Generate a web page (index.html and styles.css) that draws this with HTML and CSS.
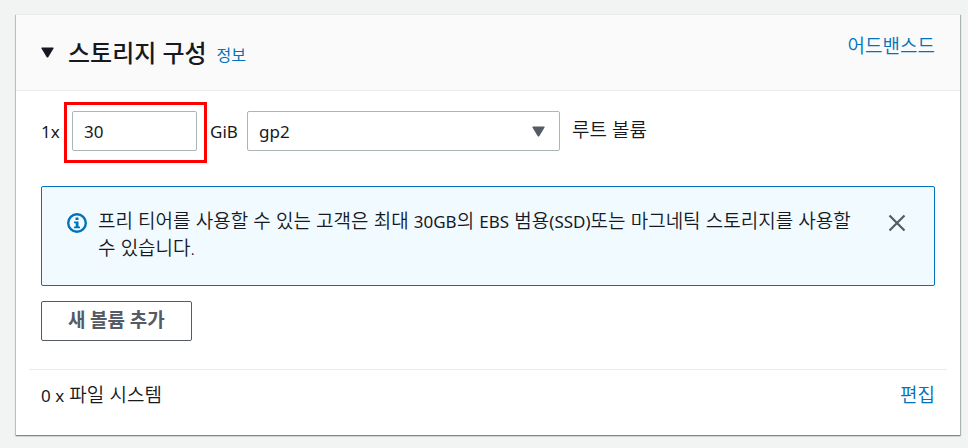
FILE: index.html
```html
<!DOCTYPE html>
<html lang="ko">
<head>
<meta charset="utf-8">
<meta name="viewport" content="width=device-width, initial-scale=1">
<title>스토리지 구성</title>
<link rel="stylesheet" href="styles.css">
</head>
<body>
<main class="card">
  <header class="card-header">
    <button class="toggle" type="button" aria-label="스토리지 구성" aria-expanded="true">
      <svg class="caret" viewBox="0 0 13 11" aria-hidden="true"><path d="M1 .5h11q1 0 .5 1L7.400 10q-.9 1-1.800 0L.5 1.500Q0 .5 1 .5z"/></svg>
    </button>
    <h2 class="title">스토리지 구성</h2>
    <a class="info-link" href="#info">정보</a>
    <a class="advanced" href="#advanced">어드밴스드</a>
  </header>
  <div class="card-body">
    <div class="volume">
      <label class="count" for="size">1x</label>
      <span class="highlight"><input class="size" id="size" type="text" value="30"></span>
      <label class="unit" for="type">GiB</label>
      <span class="select-wrap">
        <select class="type" id="type"><option>gp2</option></select>
        <svg class="caret select-caret" viewBox="0 0 13 11" aria-hidden="true"><path d="M1 .5h11q1 0 .5 1L7.400 10q-.9 1-1.800 0L.5 1.500Q0 .5 1 .5z"/></svg>
      </span>
      <span class="root">루트 볼륨</span>
    </div>
    <div class="alert" role="status">
      <svg class="info-icon" viewBox="0 0 20 20" aria-hidden="true"><circle cx="10" cy="10" r="8.800"/><path d="M8.500 4.500h3v2.500h-3zM7 8.500h4.500v5H13v1.800H7v-1.800h1.700v-3.200H7z"/></svg>
      <p class="message">프리 티어를 사용할 수 있는 고객은 최대 <span class="latin">30GB</span>의 <span class="latin">EBS</span> 범용<span class="latin">(SSD)</span>또는 마그네틱 스토리지를 사용할 수 있습니다.</p>
      <button class="close" type="button" aria-label="닫기"><svg viewBox="0 0 18 18" aria-hidden="true"><path d="M1.500 1.500l15 15M16.500 1.500l-15 15"/></svg></button>
    </div>
    <button class="add" type="button">새 볼륨 추가</button>
  </div>
  <footer class="files">
    <span><span class="latin">0 x</span> 파일 시스템</span>
    <a href="#edit">편집</a>
  </footer>
</main>
</body>
</html>
```
FILE: styles.css
```css
* { box-sizing: border-box; }

body {
  margin: 0;
  padding: 14px 8px 13px 16px;
  background: #f2f3f3;
  color: #16191f;
  font: 350 19px/27px Lato, "Noto Sans CJK KR", sans-serif;
}

a { color: #0073bb; text-decoration: none; }

button { padding: 0; border: 0; background: none; font: inherit; cursor: pointer; }

.card {
  background: #fff;
  border-top: 1px solid #eaeded;
  box-shadow: 0 1px 1px 0 #7e8888, 1px 1px 1px 0 #b4bcbc, -1px 1px 1px 0 #c5cccc;
}

.card-header {
  display: flex;
  align-items: center;
  height: 76px;
  padding: 0 25px;
  background: #fafafa;
  border-bottom: 1px solid #eaeded;
}

.toggle { display: flex; width: 27px; color: #16191f; }

.caret { width: 13px; height: 11px; fill: currentColor; }

.title { margin: 0; font-size: 24px; line-height: 34px; font-weight: 500; }

.info-link { margin: 4px auto 0 10px; font-size: 16px; font-weight: 400; }

.advanced { margin-bottom: 14px; }

.card-body { padding: 20px 25px 28px; }

.volume { display: flex; align-items: center; }

.count, .unit, .size, .type, .latin {
  font-family: "Noto Sans", sans-serif;
  font-size: 17px;
  font-weight: 400;
}

.latin { line-height: 1; }

.count { width: 31px; }

.unit { width: 50px; padding-left: 13px; }

.highlight { position: relative; display: flex; width: 125px; }

.highlight::after {
  content: "";
  position: absolute;
  inset: -9px -10px -12px -8px;
  border: 3px solid #f00;
  pointer-events: none;
}

.size, .type {
  width: 100%;
  height: 40px;
  padding: 0 11px;
  color: inherit;
  background: #fff;
  border: 1px solid #aab7b8;
  border-radius: 2px;
}

.select-wrap { position: relative; flex: 0 1 313px; }

.type { display: block; appearance: none; }

.select-caret {
  position: absolute;
  top: 15px;
  right: 15px;
  color: #545b64;
  pointer-events: none;
}

.root { margin: 0 0 4px 12px; white-space: nowrap; }

.alert {
  display: flex;
  align-items: flex-start;
  min-height: 100px;
  margin: 35px 0 15px;
  padding: 20px 28px 24px 25px;
  background: #f1faff;
  border: 1px solid #0073bb;
  border-radius: 2px;
}

.info-icon { flex: none; width: 20px; height: 20px; margin: 6px 11px 0 0; fill: #0073bb; }

.info-icon circle { fill: none; stroke: #0073bb; stroke-width: 2.4; }

.message { flex: 1; margin: 0; }

.close { display: flex; margin: 7px 0 0 32px; color: #545b64; }

.close svg { width: 18px; height: 18px; fill: none; stroke: currentColor; stroke-width: 2.2; }

.add {
  display: block;
  height: 40px;
  padding: 0 26px 4px;
  color: #545b64;
  font-weight: 700;
  border: 1px solid #545b64;
  border-radius: 2px;
}

.files {
  display: flex;
  justify-content: space-between;
  margin: 0 13px;
  padding: 11px 12px 27px;
  border-top: 1px solid #eaeded;
}
```
